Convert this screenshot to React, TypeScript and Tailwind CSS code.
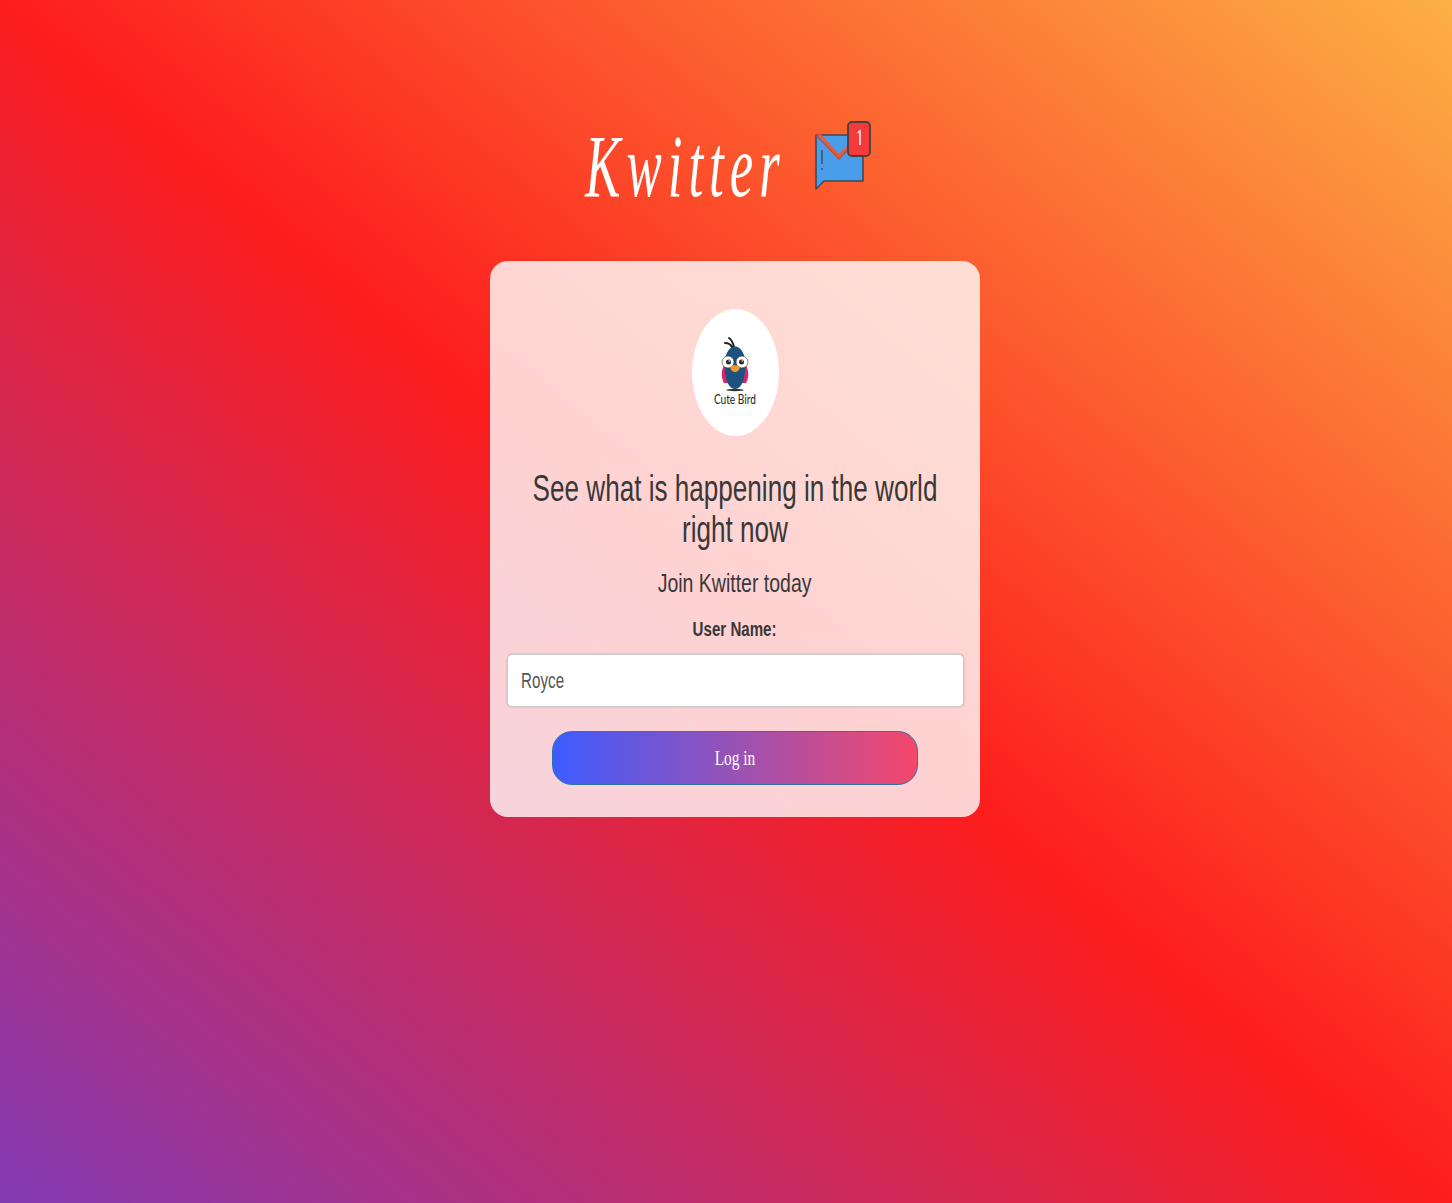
function MailIcon() {
  return (
    <svg width="62" height="72" viewBox="0 0 62 72" className="shrink-0">
      {/* envelope body */}
      <path d="M6 17 L53 17 L53 63 L14 63 L6 71 Z" fill="#4a9de9" stroke="#3d4a55" strokeWidth="1.600" strokeLinejoin="round" />
      <path d="M8 15 L29 38 L39 28" fill="none" stroke="#f4552c" strokeWidth="2.600" />
      <path d="M6 17 L29 41 L38 32" fill="none" stroke="#c9472e" strokeWidth="1.400" />
      <path d="M12 32 V46 M12 50 V52" stroke="#3d4a55" strokeWidth="1.400" />
      {/* badge */}
      <rect x="38" y="4" width="22" height="34" rx="4" fill="#f43a3a" stroke="#4a3f3f" strokeWidth="1.800" />
      <path d="M47.500 15 L50 13 V27" fill="none" stroke="#fff" strokeWidth="1.400" />
    </svg>
  );
}

function BirdLogo() {
  return (
    <svg width="34" height="56" viewBox="0 0 34 56">
      <path d="M11 2 C14 4 15 7 16 11 M7 7 C11 7 13 9 14 11" fill="none" stroke="#222" strokeWidth="2" strokeLinecap="round" />
      <path d="M6 29 C3 35 3 42 6 47 L13 47 L13 30 Z M28 29 C31 35 31 42 28 47 L21 47 L21 30 Z" fill="#d9246b" />
      <path d="M17 10.500 C22 10.500 26 16 27 24 C28.500 38 25 53 17 53 C9 53 5.500 38 7 24 C8 16 12 10.500 17 10.500 Z" fill="#1d5180" />
      <circle cx="10" cy="26" r="6" fill="#fff" stroke="#333" strokeWidth="0.600" />
      <circle cx="24" cy="26" r="6" fill="#fff" stroke="#333" strokeWidth="0.600" />
      <circle cx="10.500" cy="26" r="2.500" fill="#2a2a2a" />
      <circle cx="23.500" cy="26" r="2.500" fill="#2a2a2a" />
      <circle cx="11.300" cy="25" r="0.800" fill="#fff" />
      <circle cx="24.300" cy="25" r="0.800" fill="#fff" />
      <path d="M12 31 C14 28.500 20 28.500 22 31 C21 35 19 36 17 36 C15 36 13 35 12 31 Z" fill="#f39c2d" />
      <ellipse cx="17" cy="54" rx="9" ry="1.200" fill="#333" />
    </svg>
  );
}

export default function App() {
  return (
    <div className="min-h-screen bg-[linear-gradient(to_top_right,#833ab4,#fd1d1d,#fcb045)] pl-[18px] font-['Liberation_Sans',sans-serif] text-[#383838]">
      <header className="h-[261px] flex items-start justify-center pt-[118px]">
        <div className="flex items-start gap-[26px] pr-[12px]">
          <h1 className="mt-[8px] w-[197px] flex justify-center text-white font-['Liberation_Serif',serif] italic text-[88px] leading-[82px] tracking-[10px] scale-x-[0.6] whitespace-nowrap">
            Kwitter
          </h1>
          <MailIcon />
        </div>
      </header>

      <main className="w-[490px] h-[556px] mx-auto bg-white/80 rounded-[18px] flex flex-col items-center pt-[48px]">
        <div className="w-[87px] h-[127px] rounded-[50%] bg-white flex flex-col items-center pt-[27px]">
          <BirdLogo />
          <span className="font-['Lato',sans-serif] text-[13px] leading-[16px] text-[#222] whitespace-nowrap -mt-[1px] scale-x-[0.78]">
            Cute Bird
          </span>
        </div>

        <h2 className="mt-[32px] w-[600px] shrink-0 text-center text-[36px] leading-[41px] scale-x-[0.725]">
          See what is happening in the world right now
        </h2>
        <h3 className="mt-[17px] text-[26px] leading-[32px] whitespace-nowrap scale-x-[0.75]">
          Join Kwitter today
        </h3>
        <label className="mt-[18px] text-[20px] leading-[24px] font-bold whitespace-nowrap scale-x-[0.755]">
          User Name:
        </label>
        <div className="mt-[13px] w-[457px] h-[53px] bg-white border border-[#ccc] rounded-[5px] overflow-hidden shadow-[0_0_2px_rgba(0,0,0,0.25)]">
          <input
            defaultValue="Royce"
            className="w-[640px] h-full pl-[19px] text-[22px] text-[#555] outline-none origin-left scale-x-[0.69]"
          />
        </div>
        <button className="mt-[24px] w-[366px] h-[54px] rounded-[20px] border border-[#2f73a8] bg-[linear-gradient(to_right,#3d5cff,#f5476b)]">
          <span className="block -mt-[2px] font-['Liberation_Serif',serif] text-white text-[22px] scale-x-[0.7]">Log in</span>
        </button>
      </main>
    </div>
  );
}
